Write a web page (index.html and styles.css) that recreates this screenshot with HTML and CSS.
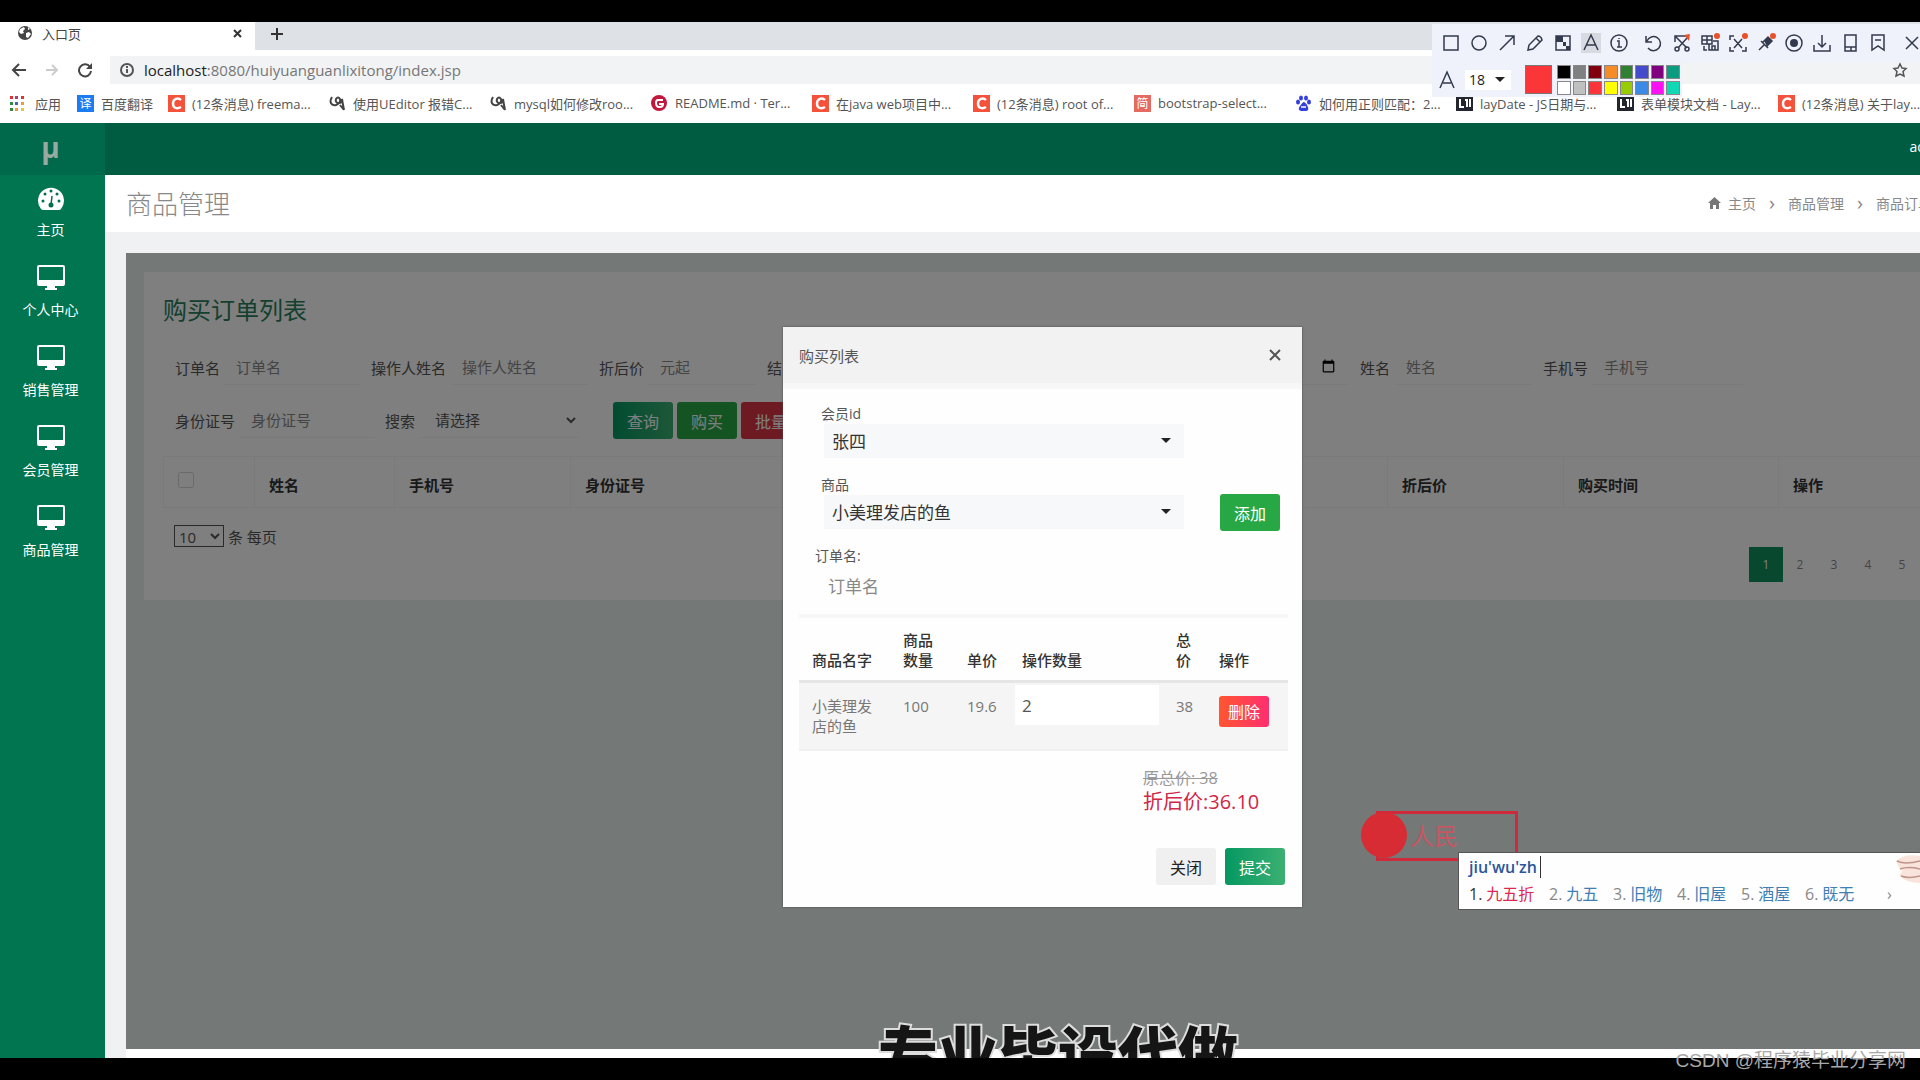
FILE: index.html
```html
<!DOCTYPE html>
<html lang="zh-CN">

<head>
    <meta charset="UTF-8">
    <meta name="viewport" content="width=device-width, initial-scale=1.0">
    <title>入口页</title>
    <link rel="stylesheet" href="styles.css">
</head>

<body>

    <!-- Shared icons -->
    <svg class="defs" aria-hidden="true">
        <symbol id="desktop" viewBox="0 0 30 26">
            <path fill="currentColor" fill-rule="evenodd" d="M3 0h24a2 2 0 0 1 2 2v17a2 2 0 0 1-2 2h-8v2h2v2H9v-2h2v-2H3a2 2 0 0 1-2-2V2a2 2 0 0 1 2-2zm0 2v13h24V2z" />
        </symbol>
        <symbol id="csdn" viewBox="0 0 17 17">
            <path fill="#f5523b" d="M0 0h17v17H0z" />
            <path fill="none" stroke="#fff" stroke-width="2.4" d="M13 5C10 2 5 4 5 8.500s4 6 8 3.500" />
        </symbol>
        <symbol id="ask" viewBox="0 0 17 17">
            <path fill="none" stroke="#444" stroke-width="2" d="M3 2C0 7 2 11 7 10q5-2 4-6-2-3-4 0-1 4 3 4 3 0 3-4 1 6 2 11M11 10l4 5" />
        </symbol>
        <symbol id="lay" viewBox="0 0 17 17">
            <path fill="#23262e" d="M0 1h17v15H0z" />
            <path fill="none" stroke="#fff" stroke-width="2" d="M4 4v8h4M9 5h2v7M14 4v8" />
        </symbol>
    </svg>

    <div class="screen">
        <!-- Browser -->
        <div class="tabs">
            <div class="tab">
                <svg width="16" height="16" viewBox="0 0 16 16">
                    <circle cx="8" cy="8" r="7" fill="#444" />
                    <path fill="#fff" d="M3 4l4-2 1 2-2 2 1 2-3 1-2-2zM9 8l3-1 2 2-3 4-2-1zM11 2l2 2-2 1z" />
                </svg>
                <span>入口页</span>
                <svg class="tab-close" width="9" height="9" viewBox="0 0 9 9"><path d="M1 1l7 7M8 1L1 8" stroke="#333" stroke-width="2" /></svg>
            </div>
            <svg width="14" height="14" viewBox="0 0 14 14"><path d="M7 1v12M1 7h12" stroke="#333" stroke-width="2" /></svg>
        </div>
        <div class="address">
            <svg width="16" height="16" viewBox="0 0 16 16"><path d="M15 8H2M8 2L2 8l6 6" fill="none" stroke="#444" stroke-width="2" /></svg>
            <svg width="16" height="16" viewBox="0 0 16 16"><path d="M2 8h11M8 3l5 5-5 5" fill="none" stroke="#ccc" stroke-width="2" /></svg>
            <svg width="16" height="16" viewBox="0 0 16 16"><path d="M13 5A6 6 0 1 0 14 9" fill="none" stroke="#444" stroke-width="2" /><path d="M15 1v6H9z" fill="#444" /></svg>
            <div class="url">
                <svg width="16" height="16" viewBox="0 0 16 16"><circle cx="8" cy="8" r="6" fill="none" stroke="#555" stroke-width="2" /><path d="M8 7v4M8 4v2" stroke="#555" stroke-width="2" /></svg>
                <span><b>localhost</b>:8080/huiyuanguanlixitong/index.jsp</span>
                <svg class="star" width="16" height="16" viewBox="0 0 16 16"><path d="M8 2l2 4 4 .5-3 3 1 4.500-4-2-4 2 1-4.500-3-3L6 6z" fill="none" stroke="#555" stroke-width="1.500" /></svg>
            </div>
        </div>
        <nav class="bookmarks">
            <a class="apps" href="#">
                <svg width="14" height="16" viewBox="0 0 14 16">
                    <path fill="#d33" d="M0 1h3v3H0zM11 1h3v3h-3z" /><path fill="#a4466f" d="M5 1h3v3H5z" />
                    <path fill="#384" d="M0 7h3v3H0zM0 13h3v3H0z" /><path fill="#46a" d="M5 7h3v3H5z" />
                    <path fill="#e93" d="M11 7h3v3h-3zM5 13h3v3H5z" /><path fill="#dc3" d="M11 13h3v3h-3z" />
                </svg>应用</a>
            <a class="fanyi" href="#"><i class="fav blue">译</i>百度翻译</a>
            <a href="#"><svg class="fav"><use href="#csdn" /></svg>(12条消息) freema...</a>
            <a href="#"><svg class="fav"><use href="#ask" /></svg>使用UEditor 报错C...</a>
            <a href="#"><svg class="fav"><use href="#ask" /></svg>mysql如何修改roo...</a>
            <a href="#"><svg class="fav" viewBox="0 0 17 17"><circle cx="8" cy="8" r="8" fill="#c2183c" /><path d="M12 5H7Q5 5 5 8t2 4h2q3 0 3-3H8" fill="none" stroke="#fff" stroke-width="2" /></svg>README.md · Ter...</a>
            <a href="#"><svg class="fav"><use href="#csdn" /></svg>在java web项目中...</a>
            <a href="#"><svg class="fav"><use href="#csdn" /></svg>(12条消息) root of...</a>
            <a href="#"><i class="fav red">简</i>bootstrap-select...</a>
            <a href="#"><svg class="fav" viewBox="0 0 17 17"><g fill="#3340dd"><ellipse cx="3" cy="7" rx="2" ry="2.500" /><ellipse cx="6" cy="3" rx="2" ry="2.500" /><ellipse cx="11" cy="3" rx="2" ry="2.500" /><ellipse cx="14" cy="7" rx="2" ry="2.500" /><path d="M8.500 7q2 0 4 4t-1 5H6q-4-1-1-5t3.500-4z" /></g><path d="M6 12h5" stroke="#fff" stroke-width="1.500" /></svg>如何用正则匹配：2...</a>
            <a href="#"><svg class="fav"><use href="#lay" /></svg>layDate - JS日期与...</a>
            <a href="#"><svg class="fav"><use href="#lay" /></svg>表单模块文档 - Lay...</a>
            <a href="#"><svg class="fav"><use href="#csdn" /></svg>(12条消息) 关于lay...</a>
        </nav>

        <!-- Application -->
        <div class="app">
            <aside class="sidebar">
                <div class="logo">µ</div>
                <a href="#">
                    <svg width="28" height="26" viewBox="0 0 28 26">
                        <path fill="currentColor" d="M4 24a13 13 0 1 1 20 0q-1 1-2 1H6q-1 0-2-1z" />
                        <g fill="#00704d"><circle cx="6" cy="16" r="1.500" /><circle cx="8" cy="9" r="1.500" /><circle cx="14" cy="6" r="1.500" /><circle cx="20" cy="9" r="1.500" /><circle cx="22" cy="16" r="1.500" /><circle cx="14" cy="20" r="2.500" /></g>
                        <path d="M14 20l1-9" stroke="#00704d" stroke-width="1.500" />
                    </svg>主页</a>
                <a href="#"><svg width="30" height="26"><use href="#desktop" /></svg>个人中心</a>
                <a href="#"><svg width="30" height="26"><use href="#desktop" /></svg>销售管理</a>
                <a href="#"><svg width="30" height="26"><use href="#desktop" /></svg>会员管理</a>
                <a href="#"><svg width="30" height="26"><use href="#desktop" /></svg>商品管理</a>
            </aside>

            <div class="main">
                <header class="topbar">admin</header>
                <div class="page-title">
                    <h1>商品管理</h1>
                    <div class="crumbs">
                        <svg width="13" height="12" viewBox="0 0 13 12"><path fill="#777" d="M6.500 0L13 6h-2v6H8V8H5v4H2V6H0z" /></svg>
                        <a href="#">主页</a><span>›</span><a href="#">商品管理</a><span>›</span><a href="#">商品订单</a>
                    </div>
                </div>

                <div class="frame">
                    <div class="card">
                        <h2>购买订单列表</h2>
                        <form class="search">
                            <div class="line">
                                <label class="g-order">订单名 <input type="text" placeholder="订单名"></label>
                                <label class="g-operator">操作人姓名 <input type="text" placeholder="操作人姓名"></label>
                                <label class="g-price">折后价 <input type="text" placeholder="元起"></label>
                                <label class="g-date">结 <input type="date"></label>
                                <label class="g-name">姓名 <input type="text" placeholder="姓名"></label>
                                <label class="g-phone">手机号 <input type="text" placeholder="手机号"></label>
                            </div>
                            <div class="line">
                                <label class="g-id">身份证号 <input type="text" placeholder="身份证号"></label>
                                <label class="g-shop">搜索 <select><option>请选择</option></select></label>
                                <div class="tools">
                                    <button type="button" class="btn primary">查询</button>
                                    <button type="button" class="btn success">购买</button>
                                    <button type="button" class="btn danger">批量</button>
                                </div>
                            </div>
                        </form>
                        <table class="orders">
                            <thead>
                                <tr>
                                    <th class="c-check"><input type="checkbox" aria-label="全选"></th>
                                    <th class="c-name">姓名</th>
                                    <th class="c-phone">手机号</th>
                                    <th class="c-id">身份证号</th>
                                    <th></th>
                                    <th></th>
                                    <th></th>
                                    <th class="c-price">折后价</th>
                                    <th class="c-time">购买时间</th>
                                    <th class="c-act">操作</th>
                                </tr>
                            </thead>
                        </table>
                        <div class="pager">
                            <label><select><option>10</option></select> 条 每页</label>
                            <div class="pages">
                                <button class="on">1</button><button>2</button><button>3</button><button>4</button><button>5</button>
                            </div>
                        </div>
                    </div>

                    <!-- Purchase dialog -->
                    <div class="backdrop">
                        <div class="modal">
                            <div class="modal-head">
                                <span>购买列表</span>
                                <button aria-label="关闭窗口"><svg width="12" height="12" viewBox="0 0 12 12"><path d="M1 1l10 10M11 1L1 11" stroke="#555" stroke-width="2" /></svg></button>
                            </div>
                            <div class="modal-body">
                                <div class="field">
                                    <label for="member">会员id</label>
                                    <div class="pick"><select id="member"><option>张四</option></select></div>
                                </div>
                                <div class="field with-btn">
                                    <label for="goods">商品</label>
                                    <div class="pick"><select id="goods"><option>小美理发店的鱼</option></select></div>
                                    <button class="btn success">添加</button>
                                </div>
                                <div class="field name">
                                    <label for="orderName">订单名:</label>
                                    <input id="orderName" type="text" placeholder="订单名">
                                </div>
                                <table class="cart">
                                    <thead>
                                        <tr>
                                            <th class="w-name">商品名字</th>
                                            <th class="w-stock">商品数量</th>
                                            <th class="w-price">单价</th>
                                            <th class="w-count">操作数量</th>
                                            <th class="w-total">总价</th>
                                            <th>操作</th>
                                        </tr>
                                    </thead>
                                    <tbody>
                                        <tr>
                                            <td>小美理发店的鱼</td>
                                            <td>100</td>
                                            <td>19.6</td>
                                            <td class="count"><input type="text" value="2" aria-label="操作数量"></td>
                                            <td>38</td>
                                            <td><button class="btn danger small">删除</button></td>
                                        </tr>
                                    </tbody>
                                </table>
                                <div class="sum">
                                    <del>原总价: 38</del>
                                    <strong>折后价:36.10</strong>
                                </div>
                            </div>
                            <div class="modal-foot">
                                <button class="btn light">关闭</button>
                                <button class="btn primary">提交</button>
                            </div>
                        </div>
                    </div>
                </div>
            </div>
        </div>

        <!-- Screen capture toolbar -->
        <div class="capture">
            <div class="tools-row">
                <svg viewBox="0 0 20 20"><path d="M3 3h14v14H3z" /></svg>
                <svg viewBox="0 0 20 20"><circle cx="10" cy="10" r="7" /></svg>
                <svg viewBox="0 0 20 20"><path d="M3 17L17 3M8 3h9v9" /></svg>
                <svg viewBox="0 0 20 20"><path d="M3 17l1-5 9-9q3 0 4 4l-9 9zM11 5l4 4" /></svg>
                <svg viewBox="0 0 20 20"><path d="M3 3h14v14H3z" /><path class="solid" d="M3 3h7v6H3zM10 9h3v4h4v4h-4v-4h-3z" /></svg>
                <svg class="picked" viewBox="0 0 20 20"><path d="M3 17l7-15 7 15M6 12h8" /></svg>
                <svg viewBox="0 0 20 20"><circle cx="10" cy="10" r="8" /><path d="M8 8h2v6M8 14h5M10 5v1" /></svg>
                <svg class="gap" viewBox="0 0 20 20"><path d="M3 3v6h6M4 8a7 7 0 1 1 1 7" /></svg>
                <svg viewBox="0 0 20 20"><path d="M3 9V3h14M3 3l12 12M15 5L6 15" /><circle cx="5" cy="16" r="2" /><circle cx="15" cy="16" r="2" /><path class="hot" d="M12 2l6-1-1 7z" /></svg>
                <svg viewBox="0 0 20 20"><path d="M2 3h10v8H2zM7 3v8M2 7h10M9 11v6h9V8h-5M12 17v-4h3v4M4 13v4h3" /><circle class="hot" cx="17" cy="3" r="3" /></svg>
                <svg viewBox="0 0 20 20"><path d="M2 7V3h4M14 3h4M2 14v4h4M18 14v4h-4M6 6l8 9M14 6l-8 9" /><circle class="hot" cx="17" cy="3" r="3" /></svg>
                <svg viewBox="0 0 20 20"><path d="M3 17l5-5M5 8l7 7M7 9l5-5 4 4-5 5" /><path class="solid" d="M8 8l4-4 4 4-5 5z" /><circle class="hot" cx="17" cy="3" r="3" /></svg>
                <svg viewBox="0 0 20 20"><circle cx="10" cy="10" r="8" /><circle class="solid" cx="10" cy="10" r="4" /></svg>
                <svg viewBox="0 0 20 20"><path d="M10 2v12M6 10l4 4 4-4M2 12v6h16v-6" /></svg>
                <svg viewBox="0 0 20 20"><path d="M5 2h11v16H5zM5 14h11M11 14v4" /></svg>
                <svg viewBox="0 0 20 20"><path d="M4 2h12v15l-6-4-6 4zM7 7h6" /></svg>
                <svg class="gap" viewBox="0 0 20 20"><path d="M4 4l12 12M16 4L4 16" /></svg>
            </div>
            <div class="style-row">
                <svg viewBox="0 0 20 20"><path d="M3 18l7-16 7 16M6 13h8" /></svg>
                <div class="pick size"><select aria-label="字号"><option>18</option></select></div>
                <span class="current"></span>
                <div class="palette">
                    <i class="p1"></i><i class="p2"></i><i class="p3"></i><i class="p4"></i><i class="p5"></i><i class="p6"></i><i class="p7"></i><i class="p8"></i>
                    <i class="p9"></i><i class="p10"></i><i class="p11"></i><i class="p12"></i><i class="p13"></i><i class="p14"></i><i class="p15"></i><i class="p16"></i>
                </div>
            </div>
        </div>

        <div class="note"><span class="dot"></span>人民</div>

        <!-- Input method -->
        <div class="ime">
            <div class="typed">jiu'wu'zh</div>
            <ol>
                <li class="first">1.<em>九五折</em></li>
                <li>2.<em>九五</em></li>
                <li>3.<em>旧物</em></li>
                <li>4.<em>旧屋</em></li>
                <li>5.<em>酒屋</em></li>
                <li>6.<em>既无</em></li>
                <li class="next">›</li>
            </ol>
            <svg class="skin" width="26" height="32" viewBox="0 0 26 32">
                <path fill="#f9e4dc" d="M2 8Q10 0 26 3v27Q12 30 5 22q6-4 0-7z" />
                <path fill="none" stroke="#c09488" stroke-width="1.500" d="M3 8q8 4 23 0M6 16q8-3 20 0M7 23q8 3 19 0" />
            </svg>
        </div>

        <div class="caption">专业毕设代做</div>
    </div>

    <div class="watermark">CSDN @程序猿毕业分享网</div>

</body>

</html>
```
FILE: styles.css
```css
* {
    box-sizing: border-box;
}

body {
    margin: 0;
    height: 100vh;
    padding: 22px 0;
    background: #000;
    overflow: hidden;
    font-family: "Open Sans", "Noto Sans CJK SC", sans-serif;
    font-size: 15px;
    color: #555;
}

a {
    color: inherit;
    text-decoration: none;
}

i,
em {
    font-style: normal;
}

button,
input,
select {
    font: inherit;
    color: inherit;
    border: none;
    margin: 0;
    background: transparent;
}

.defs {
    position: absolute;
    width: 0;
    height: 0;
}

.screen {
    position: relative;
    height: 100%;
    overflow: hidden;
    display: flex;
    flex-direction: column;
    background: #fff;
}

/* browser */
.tabs {
    display: flex;
    align-items: center;
    gap: 15px;
    height: 28px;
    padding-bottom: 4px;
    background: #dee1e6;
}

.tab {
    display: flex;
    align-items: center;
    gap: 9px;
    width: 255px;
    height: 28px;
    margin-bottom: -4px;
    padding: 0 13px 6px 17px;
    background: #fff;
    font-size: 13px;
    color: #444;
}

.tab-close {
    margin-left: auto;
}

.address {
    display: flex;
    align-items: center;
    gap: 17px;
    height: 39px;
    padding-left: 11px;
}

.url {
    flex: 1;
    display: flex;
    align-items: center;
    gap: 9px;
    height: 28px;
    padding: 0 12px 0 9px;
    background: #f1f3f4;
    font-size: 15px;
    color: #777;
}

.url b {
    font-weight: 400;
    color: #222;
}

.star {
    margin-left: auto;
}

.bookmarks {
    display: flex;
    height: 34px;
    padding: 0 0 6px 10px;
    font-size: 13px;
    color: #555;
    white-space: nowrap;
}

.bookmarks a {
    flex: none;
    display: flex;
    align-items: center;
    gap: 7px;
    width: 161px;
}

.bookmarks .apps {
    gap: 11px;
    width: 67px;
}

.bookmarks .fanyi {
    width: 91px;
}

.fav {
    flex: none;
    width: 17px;
    height: 17px;
    color: #fff;
    font-size: 12px;
    line-height: 17px;
    text-align: center;
}

.blue {
    background: #1a7cf0;
}

.red {
    background: #e46a62;
}

/* application */
.app {
    flex: 1;
    display: flex;
    min-height: 0;
    background: #f0f1f2;
}

.sidebar {
    flex: none;
    width: 105px;
    background: #007550;
    color: #fff;
    font-size: 14px;
}

.logo {
    height: 52px;
    margin-bottom: 10px;
    padding-right: 4px;
    background: #00694b;
    color: #98aaa0;
    font: bold 28px/48px "Open Sans", sans-serif;
    text-align: center;
}

.sidebar a {
    display: flex;
    flex-direction: column;
    align-items: center;
    gap: 9px;
    height: 80px;
    padding-right: 4px;
    line-height: 20px;
}

.main {
    flex: 1;
    display: flex;
    flex-direction: column;
    min-width: 0;
    margin-right: -39px;
}

.topbar {
    height: 52px;
    padding-right: 8px;
    background: #005c41;
    color: #fff;
    font-size: 14px;
    line-height: 48px;
    text-align: right;
}

.page-title {
    display: flex;
    align-items: center;
    justify-content: space-between;
    height: 57px;
    padding: 0 27px 2px 21px;
    background: #fff;
}

.page-title h1 {
    margin: 0;
    font-size: 26px;
    font-weight: 300;
    color: #888;
}

.crumbs {
    display: flex;
    align-items: center;
    font-size: 14px;
    color: #888;
}

.crumbs svg {
    margin-right: 7px;
}

.crumbs span {
    width: 32px;
    font-size: 20px;
    line-height: 20px;
    text-align: center;
}

.frame {
    position: relative;
    flex: 1;
    margin: 21px 0 0 21px;
    padding: 19px 18px 0;
    background: #e8f0ec;
    border-bottom: 9px solid #fff;
}

.card {
    height: 328px;
    padding: 20px 19px;
    background: #fff;
}

.card h2 {
    margin: 0;
    font-size: 24px;
    font-weight: 400;
    line-height: 36px;
    color: #28805a;
}

.search {
    padding: 21px 0 1px 12px;
}

.line {
    display: flex;
    height: 36px;
    margin-bottom: 17px;
}

.line label {
    flex: none;
    display: flex;
    align-items: center;
    gap: 4px;
    padding-right: 10px;
    white-space: nowrap;
}

.line input,
.line select {
    flex: 1;
    min-width: 0;
    height: 36px;
    padding: 0 12px;
    border-bottom: 1px solid #f4f4f4;
}

.line ::placeholder {
    color: #888;
}

.line .g-order {
    width: 196px;
}

.line .g-operator {
    width: 228px;
}

.line .g-price {
    width: 168px;
}

.line .g-date {
    width: 593px;
}

.line .g-name {
    width: 183px;
}

.line .g-phone {
    width: 210px;
}

.line .g-id {
    width: 210px;
}

.line .g-shop {
    width: 204px;
}

.tools {
    display: flex;
    gap: 4px;
    margin-left: 24px;
}

.btn {
    height: 37px;
    min-width: 60px;
    padding: 0 12px;
    border-radius: 3px;
    color: #fff;
    font-size: 16px;
}

.primary {
    background: linear-gradient(to right, #059862, #3cb072);
}

.success {
    background: #28a745;
}

.danger {
    background: linear-gradient(to right, #ff5630, #ff2f70);
}

.tools .danger {
    background: #dc3545;
}

.light {
    background: #f0f0f0;
    color: #222;
}

.btn.small {
    display: block;
    height: 31px;
    min-width: 50px;
    padding: 0 8px;
}

.orders {
    width: 100%;
    table-layout: fixed;
    border-collapse: collapse;
    margin-bottom: 17px;
}

.orders th {
    height: 51px;
    padding: 4px 14px 0;
    border: 1px solid #f4f4f4;
    text-align: left;
    color: #333;
}

.orders input {
    display: block;
    width: 16px;
    height: 16px;
    margin-bottom: 8px;
    opacity: .3;
}

.c-check {
    width: 91px;
}

.c-name {
    width: 140px;
}

.c-phone,
.c-price {
    width: 176px;
}

.c-id {
    width: 218px;
}

.c-time {
    width: 215px;
}

.c-act {
    width: 143px;
}

.pager {
    display: flex;
    justify-content: space-between;
    padding: 0 3px 0 11px;
}

.pager select {
    width: 50px;
    height: 22px;
    border: 1px solid #555;
}

.pages {
    display: flex;
    margin: 22px 0 0;
}

.pages button {
    width: 34px;
    height: 35px;
    padding: 0;
    font-size: 12px;
    color: #888;
}

.pages .on {
    background: #10905c;
    color: #fff;
}

/* dialog */
.backdrop {
    position: absolute;
    inset: 0;
    padding-top: 74px;
    background: rgba(0, 0, 0, .5);
}

.modal {
    width: 519px;
    margin: 0 auto;
    background: #fefefe;
    box-shadow: 0 0 2px #444;
}

.modal-head {
    display: flex;
    align-items: center;
    justify-content: space-between;
    height: 62px;
    padding: 0 15px 0 16px;
    background: #f2f2f2;
    border-bottom: 6px solid #f7f7f7;
}

.modal-head button {
    padding: 6px;
    line-height: 0;
}

.modal-body {
    padding: 14px 14px 0 16px;
}

.field {
    position: relative;
    display: flex;
    flex-direction: column;
    margin: 0 0 16px 22px;
    font-size: 17px;
}

.field label {
    height: 21px;
    font-size: 14px;
    line-height: 21px;
}

.field select,
.field input {
    width: 100%;
    height: 34px;
    padding: 0 8px;
    color: #333;
}

/* select with a solid arrow */
.pick {
    position: relative;
    width: 360px;
    margin-left: 3px;
    background: #f7f8f9;
}

.pick select {
    appearance: none;
    display: block;
}

.pick::after {
    content: "";
    position: absolute;
    top: 50%;
    right: 13px;
    margin-top: -3px;
    border: 5px solid transparent;
    border-top-color: #222;
    border-bottom: none;
    pointer-events: none;
}

.field ::placeholder {
    color: #888;
}

.field.name {
    margin: 0 0 8px 16px;
}

.field.name input {
    height: 40px;
    padding: 0 13px;
}

.with-btn .btn {
    position: absolute;
    right: 8px;
    bottom: -2px;
}

.cart {
    width: 100%;
    table-layout: fixed;
    border-collapse: collapse;
    line-height: 20px;
}

.cart th {
    padding: 12px 8px 10px 13px;
    border-top: 4px solid #f7f7f7;
    border-bottom: 3px solid #e6e6e6;
    text-align: left;
    vertical-align: bottom;
    font-weight: 500;
    color: #333;
}

.cart td {
    padding: 13px 8px 13px 13px;
    border-bottom: 2px solid #f0f0f0;
    background: #f5f5f5;
    vertical-align: top;
    color: #777;
}

.cart td.count {
    padding: 2px 4px 0 6px;
}

.count input {
    display: block;
    width: 100%;
    height: 40px;
    padding: 0 7px;
    background: #fff;
    font-size: 17px;
    color: #555;
}

.w-name {
    width: 91px;
}

.w-stock {
    width: 64px;
}

.w-price {
    width: 55px;
}

.w-count {
    width: 154px;
}

.w-total {
    width: 43px;
}

.sum {
    display: flex;
    flex-direction: column;
    width: 145px;
    margin: 15px 0 34px auto;
    line-height: 24px;
}

.sum del {
    font-size: 16px;
    color: #999;
}

.sum strong {
    font-size: 20px;
    font-weight: 400;
    color: #d02748;
    white-space: nowrap;
}

.modal-foot {
    display: flex;
    justify-content: flex-end;
    gap: 9px;
    padding: 0 17px 22px;
}

/* capture toolbar */
.capture {
    position: absolute;
    top: 2px;
    right: 0;
    width: 488px;
    color: #333a4d;
}

.capture svg {
    flex: none;
    width: 20px;
    height: 20px;
    fill: none;
    stroke: currentColor;
    stroke-width: 1.5;
}

.capture .solid {
    fill: currentColor;
    stroke: none;
}

.capture .hot {
    fill: #e8502c;
    stroke: none;
}

.tools-row {
    display: flex;
    align-items: center;
    justify-content: space-between;
    height: 38px;
    margin-right: -2px;
    padding-left: 9px;
    background: #eff2fa;
}

.tools-row .picked {
    background: #d8dae2;
}

.tools-row .gap {
    margin-left: 6px;
}

.style-row {
    display: flex;
    align-items: center;
    width: 250px;
    height: 35px;
    padding: 0 2px 0 5px;
    background: #eff2fa;
}

.pick.size {
    width: 46px;
    margin: 0 14px 0 8px;
    background: #fff;
}

.size select {
    width: 100%;
    height: 20px;
    padding: 0 4px;
    font-size: 14px;
    color: #222;
}

.pick.size::after {
    right: 6px;
}

.current {
    width: 27px;
    height: 29px;
    margin-right: 5px;
    background: #fb3638;
    border: 1px solid #777;
}

.palette {
    flex: 1;
    display: grid;
    grid-template-columns: repeat(8, 1fr);
    gap: 2px;
}

.palette i {
    height: 14px;
    border: 1px solid #888;
}

.p1 { background: #000; }
.p2 { background: #808080; }
.p3 { background: #800010; }
.p4 { background: #f58a28; }
.p5 { background: #2f8030; }
.p6 { background: #444ccc; }
.p7 { background: #800080; }
.p8 { background: #0a9b80; }
.p9 { background: #fff; }
.p10 { background: #c0c0c0; }
.p11 { background: #fb3638; }
.p12 { background: #ffff00; }
.p13 { background: #99cc00; }
.p14 { background: #3b8ae6; }
.p15 { background: #fa10f0; }
.p16 { background: #10d8b4; }

/* text note being typed on the screen */
.note {
    position: absolute;
    top: 789px;
    left: 1376px;
    width: 142px;
    height: 50px;
    padding-left: 31px;
    border: 3px solid #cf2a3c;
    color: #c85562;
    font-size: 24px;
    line-height: 44px;
}

.dot {
    position: absolute;
    top: -2px;
    left: -18px;
    width: 46px;
    height: 46px;
    border-radius: 50%;
    background: #d82c34;
}

.ime {
    position: absolute;
    top: 830px;
    left: 1458px;
    right: 0;
    height: 58px;
    padding: 3px 10px;
    background: #fefefe;
    border: 1px solid #555;
    border-right: none;
}

.typed {
    width: max-content;
    padding-right: 3px;
    border-right: 1px solid #333;
    color: #2b569c;
    font-size: 16px;
    font-weight: 600;
    line-height: 22px;
}

.ime ol {
    display: flex;
    margin: 2px 0 0;
    padding: 0;
    list-style: none;
    font-size: 16px;
    line-height: 28px;
    color: #888;
    white-space: nowrap;
}

.ime li {
    flex: none;
    width: 64px;
}

.ime em {
    margin-left: 4px;
    color: #3f7fb4;
}

.ime .first {
    width: 80px;
    color: #333;
}

.ime .first em {
    color: #dc2850;
}

.ime .next {
    width: 20px;
    padding-left: 18px;
}

.skin {
    position: absolute;
    top: 0;
    right: 0;
}

.caption {
    position: absolute;
    left: 0;
    right: 0;
    bottom: -36px;
    padding-left: 196px;
    color: #151515;
    font-size: 60px;
    font-weight: 900;
    line-height: 80px;
    text-align: center;
    -webkit-text-stroke: 4px #ddd;
    paint-order: stroke fill;
}

.watermark {
    position: absolute;
    right: 14px;
    bottom: 4px;
    color: #a8a8a8;
    font-family: "Liberation Sans", "Noto Sans CJK SC", sans-serif;
    font-size: 19px;
    line-height: 30px;
}
```
